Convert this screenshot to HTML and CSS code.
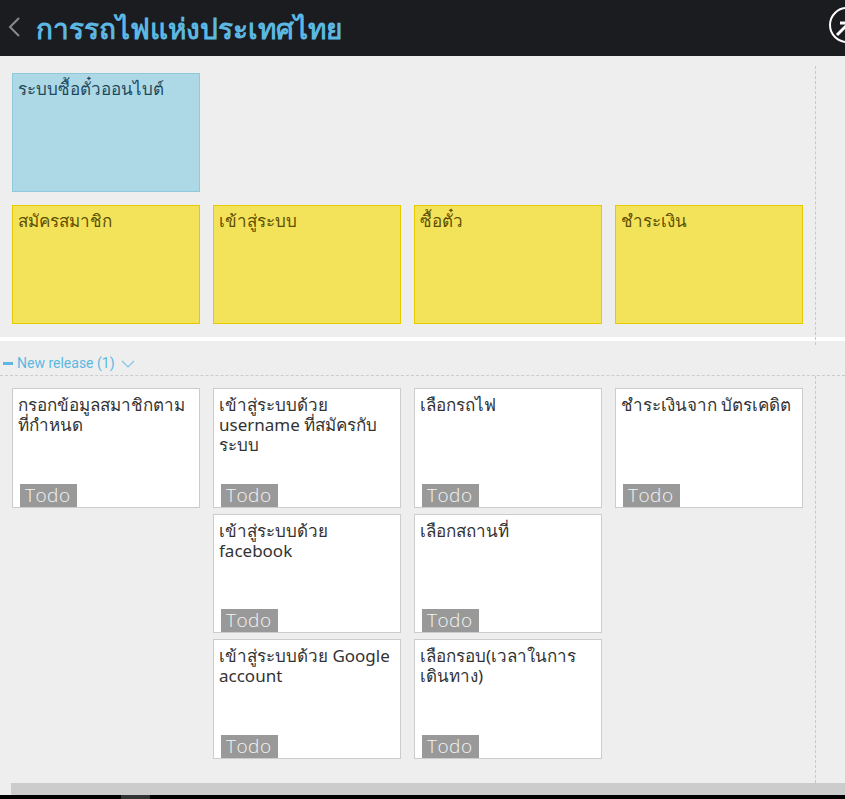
FILE: index.html
```html
<!DOCTYPE html>
<html lang="th">
<head>
<meta charset="utf-8">
<title>การรถไฟแห่งประเทศไทย</title>
<link rel="stylesheet" href="styles.css">
</head>
<body>
<header class="topbar">
  <svg class="back" width="14" height="20" viewBox="0 0 14 20"><path d="M11 1 L2 10 L11 19" fill="none" stroke="#8a8a8a" stroke-width="2"/></svg>
  <h1 class="title">การรถไฟแห่งประเทศไทย</h1>
  <svg class="close" width="40" height="40" viewBox="0 0 40 40"><circle cx="20" cy="20" r="17" fill="none" stroke="#fff" stroke-width="2"/><path d="M10 30 L22 18 M13 18 L22 18 L22 27" fill="none" stroke="#fff" stroke-width="3"/></svg>
</header>
<main class="board">
  <section class="top">
    <div class="lane">
      <div class="row">
        <div class="card blue">ระบบซื้อตั๋วออนไบต์</div>
      </div>
      <div class="row">
        <div class="card yellow">สมัครสมาชิก</div>
        <div class="card yellow">เข้าสู่ระบบ</div>
        <div class="card yellow">ซื้อตั๋ว</div>
        <div class="card yellow">ชำระเงิน</div>
      </div>
    </div>
  </section>
  <section class="release">
    <div class="release-head">
      <span class="dash"></span>
      <span class="release-name">New release (1)</span>
      <svg class="chev" width="14" height="8" viewBox="0 0 14 8"><path d="M1 1 L7 7 L13 1" fill="none" stroke="#7fc4e4" stroke-width="1.2"/></svg>
    </div>
    <div class="lane lower">
      <div class="grid">
        <div class="col">
          <div class="card white"><p>กรอกข้อมูลสมาชิกตามที่กำหนด</p><span class="todo">Todo</span></div>
        </div>
        <div class="col">
          <div class="card white"><p>เข้าสู่ระบบด้วย username ที่สมัครกับระบบ</p><span class="todo">Todo</span></div>
          <div class="card white"><p>เข้าสู่ระบบด้วย facebook</p><span class="todo">Todo</span></div>
          <div class="card white"><p>เข้าสู่ระบบด้วย Google account</p><span class="todo">Todo</span></div>
        </div>
        <div class="col">
          <div class="card white"><p>เลือกรถไฟ</p><span class="todo">Todo</span></div>
          <div class="card white"><p>เลือกสถานที่</p><span class="todo">Todo</span></div>
          <div class="card white"><p>เลือกรอบ(เวลาในการเดินทาง)</p><span class="todo">Todo</span></div>
        </div>
        <div class="col">
          <div class="card white"><p>ชำระเงินจาก บัตรเคดิต</p><span class="todo">Todo</span></div>
        </div>
      </div>
    </div>
  </section>
  <div class="hscroll"><div class="track"></div></div>
  <div class="bottombar"><div class="thumb"></div></div>
</main>
</body>
</html>
```
FILE: styles.css
```css
* { box-sizing: border-box; }
html, body { margin: 0; padding: 0; }
body {
  width: 845px;
  height: 799px;
  overflow: hidden;
  background: #eeeeee;
  font-family: "Noto Sans", "Open Sans", sans-serif;
}
.topbar {
  position: relative;
  height: 56px;
  background: #1b1c20;
  display: flex;
  align-items: center;
  overflow: hidden;
}
.back { margin-left: 8px; margin-top: -2px; }
.title {
  margin: 0 0 0 14px;
  font-size: 28px;
  font-weight: 600;
  color: #5cb8e2;
  line-height: 56px;
}
.close { position: absolute; left: 827px; top: 5px; }
.board { display: flex; flex-direction: column; }
.top {
  border-bottom: 4px solid #ffffff;
  height: 285px;
}
.lane {
  width: 816px;
  border-right: 1px dashed #c8c8c8;
  padding: 7px 0 0 12px;
  height: 279px;
  margin-top: 10px;
}
.row { display: flex; gap: 13px; margin-bottom: 13px; }
.card {
  width: 188px;
  height: 119px;
  font-size: 17px;
  line-height: 22px;
  padding: 4px 5px;
}
.blue { background: #add8e6; border: 1px solid #90c8dc; color: #1d4a5c; }
.yellow { background: #f3e35a; border: 1px solid #e6ca00; color: #5e4f00; }
.release { display: flex; flex-direction: column; }
.release-head {
  height: 35px;
  display: flex;
  align-items: center;
  padding-top: 10px;
  border-bottom: 1px dashed #cccccc;
}
.dash { width: 10px; height: 3px; background: #5cb8e2; margin-left: 3px; margin-right: 4px; }
.release-name {
  font-family: "Liberation Sans Narrow", "Roboto", sans-serif;
  font-size: 14px;
  color: #5cb8e2;
}
.chev { margin-left: 6px; margin-top: 2px; }
.lower {
  margin-top: 0;
  padding-top: 12px;
  height: 407px;
  border-right: 1px dashed #c8c8c8;
}
.grid { display: flex; gap: 13px; }
.col { display: flex; flex-direction: column; gap: 6px; }
.white {
  position: relative;
  height: 119.5px;
  background: #ffffff;
  border: 1px solid #cccccc;
  color: #333333;
  font-size: 17px;
  line-height: 20px;
  padding: 6px 5px;
}
.white p { margin: 0; }
.todo {
  position: absolute;
  left: 7px;
  bottom: 0;
  width: 57px;
  height: 23px;
  background: #999999;
  color: #f4f4f4;
  font-family: "Open Sans", sans-serif;
  font-weight: 300;
  font-size: 19px;
  letter-spacing: 0.5px;
  line-height: 23px;
  padding-left: 5px;
  white-space: nowrap;
}
.hscroll { height: 12px; background: #eeeeee; padding-left: 11px; }
.track { height: 12px; background: #cccccc; }
.bottombar { height: 4px; background: #000; }
.thumb { margin-left: 121px; width: 29px; height: 4px; background: #333; }
```
